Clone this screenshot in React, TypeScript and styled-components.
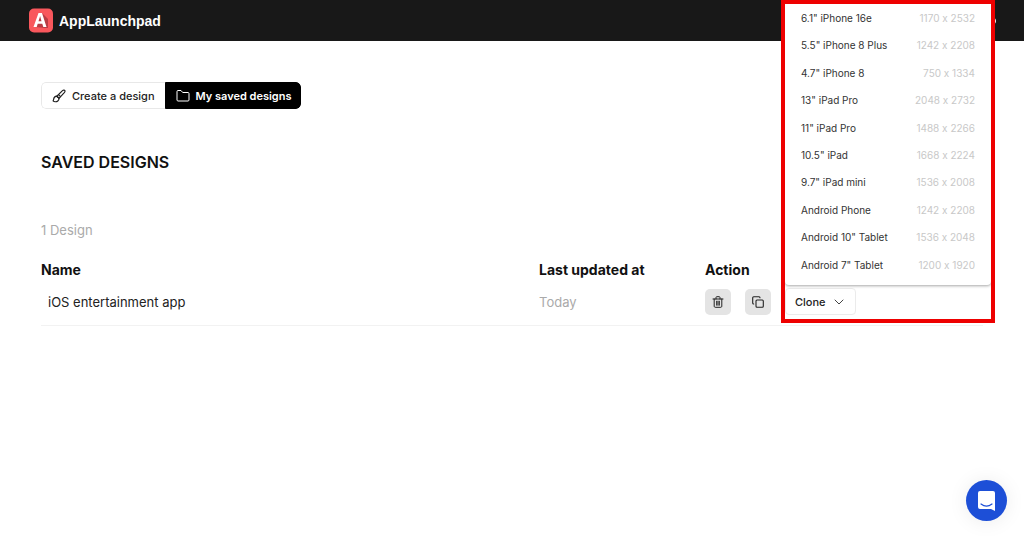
import React from "react";
import styled, { createGlobalStyle } from "styled-components";

const GlobalStyle = createGlobalStyle`
  *, *::before, *::after { box-sizing: border-box; }
  body {
    margin: 0;
    background: #fff;
    color: #111;
    font-family: Inter, "Liberation Sans", sans-serif;
    font-size: 13px;
    font-feature-settings: "calt" 0;
    overflow-x: hidden;
  }
  button { font: inherit; color: inherit; cursor: pointer; }
`;

const Header = styled.header`
  display: flex;
  align-items: center;
  justify-content: space-between;
  height: 41px;
  padding: 0 28px;
  background: #181818;
  color: #fff;
`;

const Brand = styled.a`
  display: flex;
  align-items: center;
  gap: 6px;
  color: #fff;
  font: bold 14px/20px "Liberation Sans", Arial, sans-serif;
  text-decoration: none;
`;

const AccountButton = styled.button`
  width: 14px;
  height: 10px;
  padding: 0;
  border: 1px solid #fff;
  border-radius: 50%;
  background: transparent;
`;

const Main = styled.main`
  padding: 41px 41px 0;
`;

const Tabs = styled.nav`
  display: flex;
  width: max-content;
  border-radius: 5px;
  overflow: hidden;
`;

const Tab = styled.button<{ $active?: boolean }>`
  display: flex;
  align-items: center;
  gap: 6px;
  height: 27px;
  padding: 0 ${(p) => (p.$active ? "8px" : "10px")} 0 10px;
  border: 1px solid ${(p) => (p.$active ? "#000" : "#e8e8e8")};
  border-right-width: ${(p) => (p.$active ? "1px" : "0")};
  border-radius: ${(p) => (p.$active ? "0 5px 5px 0" : "5px 0 0 5px")};
  background: ${(p) => (p.$active ? "#000" : "#fff")};
  color: ${(p) => (p.$active ? "#fff" : "#222")};
  font-size: 11px;
  font-weight: ${(p) => (p.$active ? 600 : 500)};
  line-height: 16px;
`;

const Title = styled.h1`
  margin: 41px 0 0;
  font-size: 16px;
  font-weight: 600;
  line-height: 24px;
`;

const Count = styled.p`
  margin: 46px 0 0;
  color: #aaa;
  font-size: 13px;
  line-height: 20px;
`;

const Table = styled.table`
  width: 100%;
  margin-top: 17px;
  border-collapse: collapse;
  table-layout: fixed;
`;

const HeadCell = styled.th<{ $width?: string }>`
  width: ${(p) => p.$width ?? "auto"};
  padding: 0;
  height: 25px;
  font-size: 14px;
  font-weight: 700;
  text-align: left;
`;

const Cell = styled.td<{ $muted?: boolean; $inset?: boolean }>`
  height: 43px;
  padding: 0 0 3px ${(p) => (p.$inset ? "7px" : "0")};
  border-bottom: 1px solid #f2f2f2;
  color: ${(p) => (p.$muted ? "#aaa" : "#222")};
  font-size: 13px;
`;

const Actions = styled.div`
  display: flex;
  align-items: center;
  gap: 14px;
`;

const IconButton = styled.button`
  display: grid;
  flex: none;
  place-items: center;
  width: 26px;
  height: 26px;
  padding: 0;
  border: 0;
  border-radius: 5px;
  background: #e4e4e4;
`;

const CloneMenu = styled.div`
  position: relative;
  flex: none;
`;

const CloneButton = styled.button`
  display: flex;
  align-items: center;
  gap: 8px;
  width: 71px;
  height: 27px;
  padding: 0 9px;
  border: 1px solid #ebebeb;
  border-radius: 4px;
  background: #fff;
  font-size: 11px;
  font-weight: 500;
`;

const Highlight = styled.div`
  position: absolute;
  left: -4px;
  bottom: -8px;
  width: 214px;
  height: 323px;
  border: 4px solid #ee0000;
  pointer-events: none;
`;

const Menu = styled.ul`
  position: absolute;
  left: 0;
  bottom: calc(100% + 3px);
  display: grid;
  grid-auto-rows: 1fr;
  width: 206px;
  height: 282px;
  margin: 0;
  padding: 1px 0 7px;
  border-radius: 0 0 4px 4px;
  background: #fff;
  box-shadow: 0 1px 3px rgba(0, 0, 0, 0.35);
  list-style: none;
`;

const MenuItem = styled.button`
  display: flex;
  align-items: center;
  justify-content: space-between;
  width: 100%;
  height: 100%;
  padding: 0 16px;
  border: 0;
  background: transparent;
  color: #333;
  font-size: 10px;
`;

const Resolution = styled.span`
  color: #c8c8c8;
`;

const ChatButton = styled.button`
  position: fixed;
  right: 17px;
  bottom: 17px;
  display: grid;
  place-items: center;
  width: 41px;
  height: 41px;
  padding: 0;
  border: 0;
  border-radius: 50%;
  background: #1d4fd7;
  box-shadow: 0 1px 20px rgba(0, 0, 0, 0.08);
`;

const devices = [
  ['6.1" iPhone 16e', "1170 x 2532"],
  ['5.5" iPhone 8 Plus', "1242 x 2208"],
  ['4.7" iPhone 8', "750 x 1334"],
  ['13" iPad Pro', "2048 x 2732"],
  ['11" iPad Pro', "1488 x 2266"],
  ['10.5" iPad', "1668 x 2224"],
  ['9.7" iPad mini', "1536 x 2008"],
  ["Android Phone", "1242 x 2208"],
  ['Android 10" Tablet', "1536 x 2048"],
  ['Android 7" Tablet', "1200 x 1920"],
];

const Logo = () => (
  <svg width="25" height="25" viewBox="0 0 25 25" aria-hidden="true">
    <rect x="1" y="0.5" width="24" height="24" rx="5" fill="#f9575c" />
    <path d="M14 5 20 11 20 20 17 20 7 19Z" fill="#b93c43" />
    <path d="M5.500 19 10.500 5H14L18.500 19H15.300L14.300 15.700H9.700L8.700 19Z M10.500 13.200H13.500L12.100 8Z" fill="#fff" fillRule="evenodd" />
  </svg>
);

const BrushIcon = () => (
  <svg width="14" height="14" viewBox="0 0 14 14" fill="none" stroke="#222" strokeWidth="1.200" strokeLinecap="round" strokeLinejoin="round" aria-hidden="true">
    <path d="M4.800 7.200 10.500 1.600C11.400.8 13.300.9 13 2.500c-.1.500-.4.800-.7 1.200L7 9.300Z" />
    <path d="M4.800 7.200c-1.700.2-2.900 1.200-3.100 2.700-.1.900-.3 1.400-.6 2 .9 1 3.400 1.200 4.700.1.900-.7 1.300-1.600 1.200-2.700Z" />
    <path d="m6.500 5.700 2 2" />
  </svg>
);

const FolderIcon = () => (
  <svg width="14" height="14" viewBox="0 0 14 14" fill="none" stroke="#fff" strokeWidth="1" strokeLinejoin="round" aria-hidden="true">
    <path d="M1 2.500c0-.6.4-1 1-1h3l1.700 2H12c.6 0 1 .4 1 1V11c0 .6-.4 1-1 1H2c-.6 0-1-.4-1-1Z" />
  </svg>
);

const TrashIcon = () => (
  <svg width="12" height="12" viewBox="0 0 12 12" fill="none" stroke="#222" strokeWidth="1" strokeLinecap="round" strokeLinejoin="round" aria-hidden="true">
    <path d="M1 3h10M4 3V1.500c0-.5.300-.8.800-.8h2.400c.5 0 .8.300.8.800V3M2.200 3v7.300c0 .6.400 1 1 1h5.600c.6 0 1-.4 1-1V3M4.700 5.200v4M6 5.200v4M7.300 5.200v4" />
  </svg>
);

const CopyIcon = () => (
  <svg width="12" height="12" viewBox="0 0 12 12" fill="none" stroke="#222" strokeWidth="1.100" strokeLinecap="round" strokeLinejoin="round" aria-hidden="true">
    <rect x="4" y="4" width="7.300" height="7.300" rx="1" />
    <path d="M1.700 8c-.6 0-1-.4-1-1V1.700c0-.6.4-1 1-1H7c.6 0 1 .4 1 1" />
  </svg>
);

const ChevronIcon = () => (
  <svg width="10" height="10" viewBox="0 0 10 10" fill="none" stroke="#444" strokeWidth="1" strokeLinecap="round" strokeLinejoin="round" aria-hidden="true">
    <path d="m1 3 4 4 4-4" />
  </svg>
);

const ChatIcon = () => (
  <svg width="20" height="22" viewBox="0 0 20 22" aria-hidden="true">
    <path d="M3 1h13a2 2 0 0 1 2 2v18l-4-2H3a2 2 0 0 1-2-2V3a2 2 0 0 1 2-2Z" fill="#fff" />
    <path d="M4 14c3.300 2.500 7.700 2.500 11 0" fill="none" stroke="#1d4fd7" strokeWidth="1.200" strokeLinecap="round" />
  </svg>
);

export default function App() {
  return (
    <>
      <GlobalStyle />
      <Header>
        <Brand href="#">
          <Logo />
          AppLaunchpad
        </Brand>
        <AccountButton aria-label="Account" />
      </Header>
      <Main>
        <Tabs aria-label="Designs">
          <Tab>
            <BrushIcon />
            Create a design
          </Tab>
          <Tab $active aria-current="page">
            <FolderIcon />
            My saved designs
          </Tab>
        </Tabs>
        <Title>SAVED DESIGNS</Title>
        <Count>1 Design</Count>
        <Table>
          <thead>
            <tr>
              <HeadCell scope="col">Name</HeadCell>
              <HeadCell scope="col" $width="166px">Last updated at</HeadCell>
              <HeadCell scope="col" $width="278px">Action</HeadCell>
            </tr>
          </thead>
          <tbody>
            <tr>
              <Cell $inset>iOS entertainment app</Cell>
              <Cell $muted>Today</Cell>
              <Cell>
                <Actions>
                  <IconButton aria-label="Delete design"><TrashIcon /></IconButton>
                  <IconButton aria-label="Duplicate design"><CopyIcon /></IconButton>
                  <CloneMenu>
                    <CloneButton aria-expanded="true">
                      Clone
                      <ChevronIcon />
                    </CloneButton>
                    <Menu>
                      {devices.map(([name, size]) => (
                        <li key={name}>
                          <MenuItem>
                            {name}
                            <Resolution>{size}</Resolution>
                          </MenuItem>
                        </li>
                      ))}
                    </Menu>
                    <Highlight />
                  </CloneMenu>
                </Actions>
              </Cell>
            </tr>
          </tbody>
        </Table>
      </Main>
      <ChatButton aria-label="Open chat">
        <ChatIcon />
      </ChatButton>
    </>
  );
}
